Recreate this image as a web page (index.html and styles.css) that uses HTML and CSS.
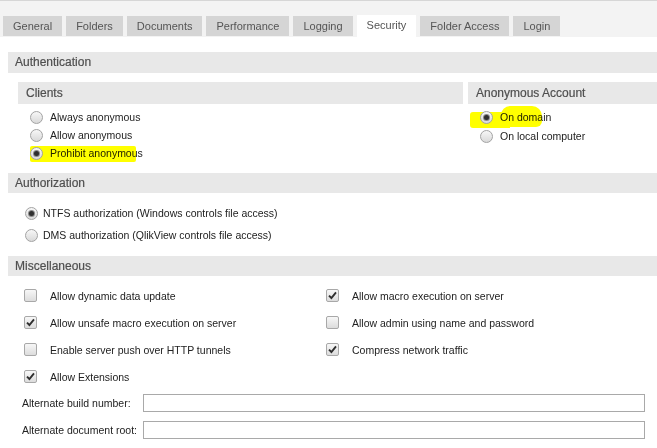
FILE: index.html
```
<!DOCTYPE html>
<html>
<head>
<meta charset="utf-8">
<link rel="stylesheet" href="styles.css">
</head>
<body>
<div class="tabbar">
  <div class="tab">General</div>
  <div class="tab">Folders</div>
  <div class="tab">Documents</div>
  <div class="tab">Performance</div>
  <div class="tab">Logging</div>
  <div class="tab active">Security</div>
  <div class="tab">Folder Access</div>
  <div class="tab">Login</div>
</div>
<div class="content">
  <div class="section-head">Authentication</div>
  <div class="auth-row">
    <div class="panel">
      <div class="sub-head">Clients</div>
      <ul class="radio-list">
        <li><span class="radio"></span>Always anonymous</li>
        <li><span class="radio"></span>Allow anonymous</li>
        <li><span class="mark mark-prohibit"></span><span class="radio on"></span>Prohibit anonymous</li>
      </ul>
    </div>
    <div class="panel">
      <div class="sub-head">Anonymous Account</div>
      <ul class="radio-list">
        <li><span class="mark mark-dom-a"></span><span class="mark mark-dom-b"></span><span class="radio on"></span>On domain</li>
        <li class="tall"><span class="radio"></span>On local computer</li>
      </ul>
    </div>
  </div>

  <div class="section-head sec-gap">Authorization</div>
  <ul class="authz-list">
    <li><span class="radio on"></span>NTFS authorization (Windows controls file access)</li>
    <li><span class="radio"></span>DMS authorization (QlikView controls file access)</li>
  </ul>

  <div class="section-head misc-gap">Miscellaneous</div>
  <div class="check-grid">
    <div class="check-item"><span class="cb"></span>Allow dynamic data update</div>
    <div class="check-item"><span class="cb"><svg viewBox="0 0 11 11" width="11" height="11"><path d="M2 5.6 L4.4 8 L9 2.4" fill="none" stroke="#2e2e2e" stroke-width="1.9"/></svg></span>Allow macro execution on server</div>
    <div class="check-item"><span class="cb"><svg viewBox="0 0 11 11" width="11" height="11"><path d="M2 5.6 L4.4 8 L9 2.4" fill="none" stroke="#2e2e2e" stroke-width="1.9"/></svg></span>Allow unsafe macro execution on server</div>
    <div class="check-item"><span class="cb"></span>Allow admin using name and password</div>
    <div class="check-item"><span class="cb"></span>Enable server push over HTTP tunnels</div>
    <div class="check-item"><span class="cb"><svg viewBox="0 0 11 11" width="11" height="11"><path d="M2 5.6 L4.4 8 L9 2.4" fill="none" stroke="#2e2e2e" stroke-width="1.9"/></svg></span>Compress network traffic</div>
    <div class="check-item"><span class="cb"><svg viewBox="0 0 11 11" width="11" height="11"><path d="M2 5.6 L4.4 8 L9 2.4" fill="none" stroke="#2e2e2e" stroke-width="1.9"/></svg></span>Allow Extensions</div>
  </div>

  <div class="fields">
    <label class="field-label">Alternate build number:</label>
    <input class="field-input" type="text">
    <label class="field-label">Alternate document root:</label>
    <input class="field-input" type="text">
  </div>
</div>
</body>
</html>
```
FILE: styles.css
```
* { box-sizing: border-box; }
body {
  margin: 0;
  background: #ffffff;
  font-family: "Liberation Sans", Arial, sans-serif;
  font-size: 10.5px;
  color: #222;
}
.tabbar {
  height: 37px;
  background: #f3f3f3;
  border-top: 1px solid #d6d6d6;
  display: flex;
  align-items: flex-end;
  gap: 4px;
  padding: 0 0 1px 3px;
}
.tab {
  height: 20px;
  line-height: 20px;
  padding: 0 10px;
  background: #d5d5d5;
  color: #555;
  font-size: 11px;
}
.tab.active {
  background: #ffffff;
  height: 22px;
  line-height: 20px;
  margin-bottom: -1px;
}
.content {
  padding-left: 8px;
  margin-top: 15px;
}
.section-head {
  height: 21px;
  line-height: 21px;
  padding-left: 7px;
  background: #e8e8e8;
  color: #4f4f4f;
  font-size: 12px;
  -webkit-text-stroke: 0.2px #4f4f4f;
}
.sec-gap { margin-top: 11px; height: 20px; line-height: 20px; }
.misc-gap { margin-top: 10px; height: 20px; line-height: 20px; }
.auth-row {
  display: grid;
  grid-template-columns: 445px 1fr;
  column-gap: 5px;
  margin-top: 9px;
  padding-left: 10px;
}
.sub-head {
  height: 22px;
  line-height: 22px;
  padding-left: 8px;
  background: #e8e8e8;
  color: #4f4f4f;
  font-size: 12px;
  -webkit-text-stroke: 0.2px #4f4f4f;
}
.radio-list {
  list-style: none;
  margin: 4px 0 0;
  padding: 0;
}
.radio-list li {
  position: relative;
  height: 18px;
  display: flex;
  align-items: center;
  gap: 7px;
  padding-left: 12px;
}
.radio-list li.tall { height: 20px; }
.radio {
  position: relative;
  flex: none;
  width: 13px;
  height: 13px;
  border-radius: 50%;
  border: 1px solid #a3a3a3;
  background: linear-gradient(#f7f7f7, #d9d9d9);
}
.radio.on::after {
  content: "";
  position: absolute;
  left: 3px;
  top: 3px;
  width: 5px;
  height: 5px;
  border-radius: 50%;
  background: #2f2f2f;
  box-shadow: 0 0 0 1px #8a8a8a;
}
.mark {
  position: absolute;
  background: #ffff00;
  mix-blend-mode: multiply;
}
.mark-prohibit {
  left: 12px;
  top: 2px;
  width: 106px;
  height: 16px;
  border-radius: 2px;
}
.mark-dom-a {
  left: 2px;
  top: 4px;
  width: 40px;
  height: 16px;
  border-radius: 3px 0 0 3px;
}
.mark-dom-b {
  left: 33px;
  top: -2px;
  width: 41px;
  height: 21px;
  border-radius: 9px 10px 6px 4px;
}
.authz-list {
  list-style: none;
  margin: 9px 0 0;
  padding: 0 0 0 17px;
}
.authz-list li {
  height: 22px;
  display: flex;
  align-items: center;
  gap: 5px;
}
.check-grid {
  display: grid;
  grid-template-columns: 302px 1fr;
  grid-auto-rows: 27px;
  margin-top: 6px;
  padding-left: 16px;
}
.check-item {
  display: flex;
  align-items: center;
  gap: 13px;
}
.cb {
  flex: none;
  width: 13px;
  height: 13px;
  border: 1px solid #a8a8a8;
  border-radius: 2px;
  background: linear-gradient(#f7f7f7, #dcdcdc);
  display: flex;
  align-items: center;
  justify-content: center;
}
.cb svg { display: block; }
.fields {
  display: grid;
  grid-template-columns: 121px 1fr;
  row-gap: 9px;
  align-items: center;
  margin-top: 4px;
  padding: 0 12px 0 14px;
}
.field-label {
  color: #222;
  white-space: nowrap;
}
.field-input {
  height: 18px;
  border: 1px solid #a9a9a9;
  background: #fff;
  margin: 0;
  padding: 0 2px;
  font: inherit;
}
```
